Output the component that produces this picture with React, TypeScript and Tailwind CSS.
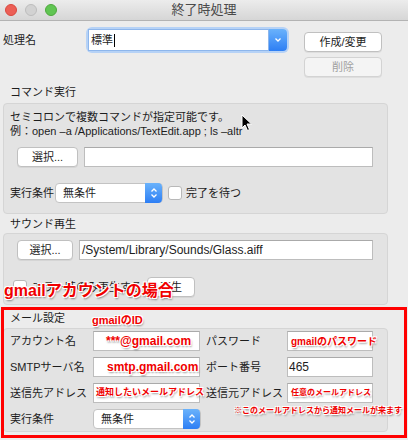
import React from 'react'

const RED_TEXT =
  'font-bold text-[#f00000] [text-shadow:-1px_-1px_0_#fff,1px_-1px_0_#fff,-1px_1px_0_#fff,1px_1px_0_#fff,1px_2px_2px_rgba(0,0,0,0.45)]'

function Button({ label, width, disabled }: { label: string; width: string; disabled?: boolean }) {
  return (
    <div
      className={`flex h-[20px] items-center justify-center rounded-[4px] border text-[11px] shadow-[0_1px_0_rgba(0,0,0,0.06)] ${width} ${
        disabled ? 'border-[#d3d3d3] bg-[#f4f4f4] text-[#a0a0a0]' : 'border-[#c0c0c0] bg-white text-[#1d1d1d]'
      }`}
    >
      {label}
    </div>
  )
}

function Field({ width, children }: { width: string; children?: React.ReactNode }) {
  return (
    <div
      className={`flex h-[20px] shrink-0 items-center overflow-visible whitespace-nowrap border border-[#bdbdbd] border-t-[#aaaaaa] bg-white ${width}`}
    >
      {children}
    </div>
  )
}

function UpDown() {
  return (
    <svg width="8" height="12" viewBox="0 0 8 12" fill="none" stroke="#fff" strokeWidth="1.3">
      <path d="M1.5 4.5 L4 2 L6.5 4.5" />
      <path d="M1.5 7.5 L4 10 L6.5 7.5" />
    </svg>
  )
}

function Popup({ width }: { width: string }) {
  return (
    <div className={`flex h-[20px] items-center rounded-[4px] border border-[#c3c3c3] bg-white ${width}`}>
      <span className="flex-1 pl-[7px] text-[11px]">無条件</span>
      <span className="flex h-[20px] w-[17px] items-center justify-center rounded-r-[4px] bg-gradient-to-b from-[#6ab2fb] to-[#2d7ef4]">
        <UpDown />
      </span>
    </div>
  )
}

function Check() {
  return <div className="h-[14px] w-[14px] rounded-[3px] border border-[#b8b8b8] bg-white" />
}

export default function App() {
  return (
    <div className="relative h-[440px] w-[408px] overflow-hidden bg-[#ececec] font-['Liberation_Sans','Noto_Sans_CJK_JP',sans-serif] text-[11px] text-[#1d1d1d]">
      {/* title bar */}
      <div className="grid h-[21px] grid-cols-[1fr_auto_1fr] items-center border-b border-[#b3b3b3] bg-gradient-to-b from-[#ececec] to-[#d6d6d6]">
        <div className="flex items-center gap-[8px] pl-[5px]">
          <span className="h-[12px] w-[12px] rounded-full border border-[#d9483f] bg-[#ec5f56]" />
          <span className="h-[12px] w-[12px] rounded-full border border-[#bdbdbd] bg-[#d2d2d2]" />
          <span className="h-[12px] w-[12px] rounded-full border border-[#4ea83d] bg-[#60c552]" />
        </div>
        <div className="text-[13px] text-[#4a4a4a]">終了時処理</div>
        <div />
      </div>

      {/* name row */}
      <div className="flex items-start pt-[8px]">
        <div className="w-[88px] pl-[3px] pt-[4px] text-[11px] leading-[14px]">処理名</div>
        <div className="flex h-[22px] w-[199px] items-stretch rounded-[4px] shadow-[0_0_0_2px_#b6d2f6]">
          <div className="flex flex-1 items-center border border-[#8db6ec] bg-white pl-[2px] text-[11px]">
            標準<span className="ml-[1px] h-[13px] w-[1px] bg-black" />
          </div>
          <div className="flex w-[18px] items-center justify-center rounded-r-[4px] bg-gradient-to-b from-[#6ab2fb] to-[#2d7ef4]">
            <svg width="8" height="6" viewBox="0 0 8 6" fill="none" stroke="#fff" strokeWidth="1.3">
              <path d="M1.5 1.5 L4 4 L6.5 1.5" />
            </svg>
          </div>
        </div>
        <div className="ml-[17px] mt-[3px] flex flex-col gap-[5px]">
          <Button label="作成/変更" width="w-[78px]" />
          <Button label="削除" width="w-[78px]" disabled />
        </div>
      </div>

      {/* command section */}
      <div className="mt-[8px] pl-[10px] leading-[14px]">コマンド実行</div>
      <div className="ml-[3px] mt-[4px] w-[385px] rounded-[4px] border border-[#d5d5d5] bg-[#e3e3e3] px-[6px] pb-[10px] pt-[6px]">
        <div className="leading-[14px]">
          <div>セミコロンで複数コマンドが指定可能です。</div>
          <div>例：open –a /Applications/TextEdit.app ; ls –altr</div>
        </div>
        <div className="mt-[9px] flex items-center gap-[6px] pl-[7px]">
          <Button label="選択..." width="w-[61px]" />
          <Field width="w-[289px]" />
        </div>
        <div className="mt-[16px] flex items-center">
          <span className="w-[45px]">実行条件</span>
          <Popup width="w-[108px]" />
          <span className="ml-[5px]">
            <Check />
          </span>
          <span className="ml-[4px]">完了を待つ</span>
        </div>
      </div>

      {/* sound section */}
      <div className="mt-[3px] pl-[10px] leading-[14px]">サウンド再生</div>
      <div className="ml-[3px] mt-[2px] w-[385px] rounded-[4px] border border-[#d5d5d5] bg-[#e3e3e3] px-[6px] pb-[7px] pt-[6px]">
        <div className="flex items-center gap-[6px] pl-[7px]">
          <Button label="選択..." width="w-[56px]" />
          <Field width="w-[294px]">
            <span className="pl-[2px] text-[12px]">/System/Library/Sounds/Glass.aiff</span>
          </Field>
        </div>
        <div className="mt-[17px] flex items-center">
          <span className="ml-[3px]">
            <Check />
          </span>
          <span className="ml-[5px] w-[115px]">エラー時のみ再生する</span>
          <Button label="再生" width="w-[48px]" />
        </div>
      </div>

      {/* mail section */}
      <div className="mt-[6px] pl-[10px] leading-[14px]">メール設定</div>
      <div className="ml-[3px] mt-[3px] w-[385px] rounded-[4px] border border-[#d5d5d5] bg-[#e3e3e3] pb-[2px] pl-[6px] pt-[2px]">
        <div className="flex flex-col gap-[6px] whitespace-nowrap">
          <div className="flex items-center">
            <span className="w-[83px] shrink-0">アカウント名</span>
            <Field width="w-[107px]">
              <span className={`pl-[12px] text-[12px] ${RED_TEXT}`}>***@gmail.com</span>
            </Field>
            <span className="w-[87px] shrink-0 pl-[6px]">パスワード</span>
            <Field width="w-[86px]">
              <span className={`pl-[3px] text-[10px] ${RED_TEXT}`}>gmailのパスワード</span>
            </Field>
          </div>
          <div className="flex items-center">
            <span className="w-[83px] shrink-0">SMTPサーバ名</span>
            <Field width="w-[107px]">
              <span className={`pl-[13px] text-[12px] ${RED_TEXT}`}>smtp.gmail.com</span>
            </Field>
            <span className="w-[87px] shrink-0 pl-[6px]">ポート番号</span>
            <Field width="w-[86px]">
              <span className="pl-[1px] text-[12px]">465</span>
            </Field>
          </div>
          <div className="flex items-center">
            <span className="w-[83px] shrink-0">送信先アドレス</span>
            <Field width="w-[107px]">
              <span className={`pl-[2px] text-[9px] ${RED_TEXT}`}>通知したいメールアドレス</span>
            </Field>
            <span className="w-[87px] shrink-0 pl-[6px]">送信元アドレス</span>
            <Field width="w-[86px]">
              <span className={`pl-[3px] text-[8px] ${RED_TEXT}`}>任意のメールアドレス</span>
            </Field>
          </div>
          <div className="flex items-center">
            <span className="w-[83px] shrink-0">実行条件</span>
            <Popup width="w-[108px]" />
          </div>
        </div>
      </div>

      {/* annotations */}
      <div className="absolute left-[1px] top-[307px] h-[131px] w-[406px] border-[3px] border-[#ff0000]" />
      <div className={`absolute left-[4px] top-[283px] text-[16px] leading-none ${RED_TEXT}`}>gmailアカウントの場合</div>
      <div className={`absolute left-[92px] top-[315px] text-[11px] leading-none ${RED_TEXT}`}>gmailのID</div>
      <div className={`absolute left-[234px] top-[407px] text-[8px] leading-none ${RED_TEXT}`}>
        ※このメールアドレスから通知メールが来ます
      </div>

      {/* mouse pointer */}
      <svg className="absolute left-[241px] top-[114px]" width="12" height="18" viewBox="0 0 12 18">
        <path d="M1 1 L1 14 L4 11 L6.5 16.5 L8.5 15.5 L6 10 L10.5 10 Z" fill="#000" stroke="#fff" strokeWidth="1" />
      </svg>
    </div>
  )
}
